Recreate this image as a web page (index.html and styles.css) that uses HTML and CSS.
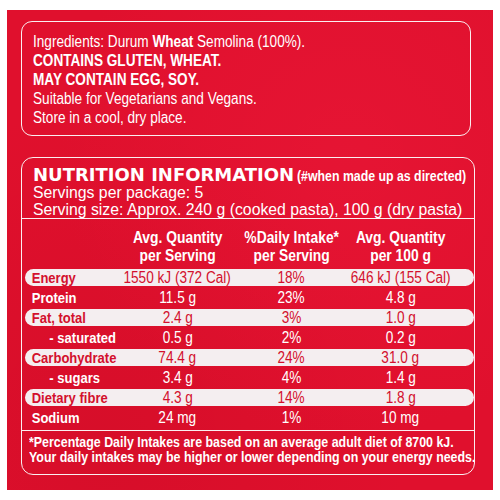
FILE: index.html
```html
<!DOCTYPE html>
<html lang="en">
<head>
<meta charset="utf-8">
<title>Nutrition Information</title>
<link rel="stylesheet" href="styles.css">
</head>
<body>
<div class="panel">
  <div class="ingredients">
    <p>Ingredients: Durum <b>Wheat</b> Semolina (100%).</p>
    <p class="caps">CONTAINS GLUTEN, WHEAT.</p>
    <p class="caps">MAY CONTAIN EGG, SOY.</p>
    <p>Suitable for Vegetarians and Vegans.</p>
    <p>Store in a cool, dry place.</p>
  </div>
  <div class="nip">
    <div class="nip-head">
      <div class="title"><span class="big">NUTRITION INFORMATION</span><span class="note">(#when made up as directed)</span></div>
      <div class="serv">Servings per package: 5</div>
      <div class="serv">Serving size: Approx. 240 g (cooked pasta), 100 g (dry pasta)</div>
    </div>
    <div class="cols">
      <span></span>
      <span class="c">Avg. Quantity<br>per Serving</span>
      <span class="c">%Daily Intake*<br>per Serving</span>
      <span class="c">Avg. Quantity<br>per 100 g</span>
    </div>
    <div class="rows">
      <div class="row pill"><span class="lab">Energy</span><span class="c">1550 kJ (372 Cal)</span><span class="c">18%</span><span class="c">646 kJ (155 Cal)</span></div>
      <div class="row"><span class="lab">Protein</span><span class="c">11.5 g</span><span class="c">23%</span><span class="c">4.8 g</span></div>
      <div class="row pill"><span class="lab">Fat, total</span><span class="c">2.4 g</span><span class="c">3%</span><span class="c">1.0 g</span></div>
      <div class="row"><span class="lab sub">- saturated</span><span class="c">0.5 g</span><span class="c">2%</span><span class="c">0.2 g</span></div>
      <div class="row pill"><span class="lab">Carbohydrate</span><span class="c">74.4 g</span><span class="c">24%</span><span class="c">31.0 g</span></div>
      <div class="row"><span class="lab sub">- sugars</span><span class="c">3.4 g</span><span class="c">4%</span><span class="c">1.4 g</span></div>
      <div class="row pill"><span class="lab">Dietary fibre</span><span class="c">4.3 g</span><span class="c">14%</span><span class="c">1.8 g</span></div>
      <div class="row"><span class="lab">Sodium</span><span class="c">24 mg</span><span class="c">1%</span><span class="c">10 mg</span></div>
    </div>
    <div class="foot">
      <p>*Percentage Daily Intakes are based on an average adult diet of 8700 kJ.</p>
      <p>Your daily intakes may be higher or lower depending on your energy needs.</p>
    </div>
  </div>
</div>
</body>
</html>
```
FILE: styles.css
```css
html, body {
  margin: 0;
  padding: 0;
  background: #ffffff;
}
body {
  font-family: "Liberation Sans", Arial, sans-serif;
  color: #ffffff;
}
p { margin: 0; }

.panel {
  margin: 10px 0 0 7px;
  width: 486px;
  height: 480px;
  box-sizing: border-box;
  padding: 11px 0 0 14px;
  background:
    radial-gradient(ellipse at 70% 30%, rgba(255,40,80,0.18), rgba(255,40,80,0) 60%),
    radial-gradient(ellipse at 20% 90%, rgba(160,0,20,0.15), rgba(160,0,20,0) 55%),
    #e0102d;
}

.ingredients {
  width: 450px;
  height: 115px;
  box-sizing: border-box;
  border: 1.5px solid #fbeef0;
  border-radius: 11px;
  padding: 10px 0 0 11px;
  font-size: 16px;
  line-height: 19px;
}
.ingredients p {
  white-space: nowrap;
  transform: scaleX(0.85);
  transform-origin: left center;
}
.ingredients b, .ingredients .caps { font-weight: bold; }

.nip {
  margin-top: 21px;
  width: 454px;
  height: 318px;
  box-sizing: border-box;
  border: 1.5px solid #fbeef0;
  border-radius: 12px;
}
.nip-head {
  padding: 8px 0 0 11px;
  border-bottom: 1.5px solid #fbeef0;
}
.title {
  height: 18px;
  line-height: 18px;
  white-space: nowrap;
}
.big {
  font-family: "DejaVu Sans", sans-serif;
  font-weight: bold;
  font-size: 18px;
}
.note {
  display: inline-block;
  margin-left: 3px;
  font-weight: bold;
  font-size: 14.5px;
  transform: scaleX(0.85);
  transform-origin: left center;
}
.serv {
  font-size: 15.8px;
  line-height: 17px;
  white-space: nowrap;
}

.cols, .row {
  display: grid;
  grid-template-columns: 95px 116px 112px 106px;
  align-items: center;
}
.c {
  display: inline-block;
  justify-self: center;
  white-space: nowrap;
  transform: scaleX(0.85);
}
.cols {
  padding: 9px 0 3px 3px;
  font-weight: bold;
  font-size: 16.3px;
  line-height: 18px;
  text-align: center;
}
.rows {
  display: flex;
  flex-direction: column;
  gap: 3px;
  padding: 1.5px 0 4px;
  border-bottom: 1.5px solid #fbeef0;
}
.row {
  height: 17px;
  margin: 0 0.5px 0 2.5px;
  border-radius: 9px;
  font-size: 16px;
  line-height: 17px;
}
.row.pill {
  background: #f4eef0;
  color: #d3102d;
}
.row .lab {
  padding-left: 8px;
  font-weight: bold;
  font-size: 15.5px;
  white-space: nowrap;
  transform: scaleX(0.84);
  transform-origin: left center;
}
.row .lab.sub { padding-left: 29px; }

.foot {
  padding: 4px 0 0 7px;
  font-weight: bold;
  font-size: 14.6px;
  line-height: 15px;
}
.foot p {
  white-space: nowrap;
  transform: scaleX(0.85);
  transform-origin: left center;
}
```
